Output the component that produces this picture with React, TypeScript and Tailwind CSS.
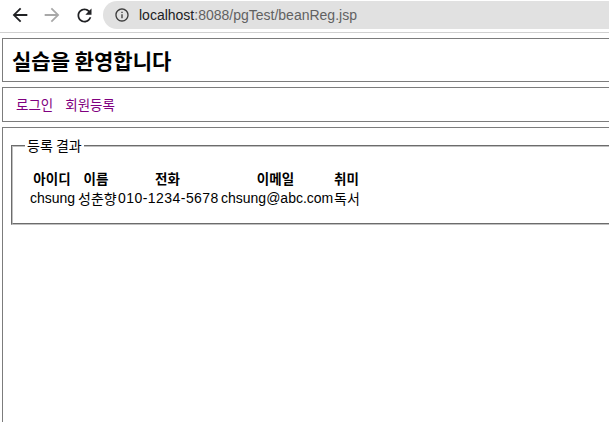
import React from "react";

const cjk = { fontFamily: '"Noto Sans CJK KR", "Noto Sans", sans-serif' };

function BackIcon({ color }: { color: string }) {
  return (
    <svg width="22" height="22" viewBox="0 0 24 24" fill={color}>
      <path d="M20 11H7.83l5.59-5.59L12 4l-8 8 8 8 1.41-1.41L7.83 13H20v-2z" />
    </svg>
  );
}

function ForwardIcon({ color }: { color: string }) {
  return (
    <svg width="22" height="22" viewBox="0 0 24 24" fill={color}>
      <path d="M12 4l-1.41 1.41L16.17 11H4v2h12.17l-5.58 5.59L12 20l8-8z" />
    </svg>
  );
}

function ReloadIcon() {
  return (
    <svg width="21" height="21" viewBox="0 0 24 24" fill="#202124">
      <path d="M17.65 6.35C16.2 4.9 14.21 4 12 4c-4.42 0-7.99 3.58-7.99 8s3.57 8 7.99 8c3.73 0 6.84-2.55 7.73-6h-2.08c-.82 2.33-3.04 4-5.65 4-3.31 0-6-2.69-6-6s2.69-6 6-6c1.66 0 3.14.69 4.22 1.78L13 11h7V4l-2.35 2.35z" />
    </svg>
  );
}

function InfoIcon() {
  return (
    <svg width="16" height="16" viewBox="0 0 24 24" fill="#3c3c3c">
      <path d="M11 7h2v2h-2zm0 4h2v6h-2zm1-9C6.48 2 2 6.48 2 12s4.48 10 10 10 10-4.48 10-10S17.52 2 12 2zm0 18c-4.41 0-8-3.59-8-8s3.59-8 8-8 8 3.59 8 8-3.59 8-8 8z" />
    </svg>
  );
}

function Toolbar() {
  return (
    <div className="h-[33px] border-b border-[#d0d0d0] flex items-start pt-[1px] pl-[4px] bg-white">
      <div className="w-8 shrink-0 h-[28px] flex items-center justify-center">
        <BackIcon color="#202124" />
      </div>
      <div className="w-8 shrink-0 h-[28px] flex items-center justify-center">
        <ForwardIcon color="#a8a8a8" />
      </div>
      <div className="w-8 shrink-0 h-[28px] flex items-center justify-center">
        <ReloadIcon />
      </div>
      <div className="ml-[3px] w-[540px] shrink-0 h-[28px] rounded-full bg-[#e1e1e1] flex items-center pl-[11px]">
        <InfoIcon />
        <span
          className="ml-[9px] text-[14px] whitespace-nowrap"
          style={{ fontFamily: '"Liberation Sans", Arial, sans-serif' }}
        >
          <span className="text-[#202124]">localhost</span>
          <span className="text-[#616161]">:8088/pgTest/beanReg.jsp</span>
        </span>
      </div>
    </div>
  );
}

const headers = ["아이디", "이름", "전화", "이메일", "취미"];
const row = [
  { text: "chsung", latin: true },
  { text: "성춘향", latin: false },
  { text: "010-1234-5678", latin: true },
  { text: "chsung@abc.com", latin: true },
  { text: "독서", latin: false },
];

export default function App() {
  return (
    <div className="w-[609px] h-[422px] overflow-hidden bg-white text-black">
      <Toolbar />
      <div className="pl-[2px] pt-[5px] flex flex-col gap-[5px]">
        <div className="w-[640px] h-[44px] shrink-0 border border-[#7c7c7c] flex items-center pl-[9px]">
          <h1 className="text-[21px] font-bold leading-none" style={cjk}>
            실습을 환영합니다
          </h1>
        </div>
        <div
          className="w-[640px] h-[35px] shrink-0 border border-[#7c7c7c] flex items-center pl-[13px] gap-[12px] text-[13.5px] text-[#800080]"
          style={cjk}
        >
          <a className="cursor-pointer">로그인</a>
          <a className="cursor-pointer">회원등록</a>
        </div>
        <div className="w-[640px] h-[320px] shrink-0 border border-[#7c7c7c] pl-[8px] pt-[9px]">
          <fieldset className="w-[660px] border-2 [border-style:groove] border-[#c0c0c0] pl-[12px] pt-[14px] pb-[15px]">
            <legend className="px-[2px] text-[14px] leading-[17px]" style={cjk}>
              등록 결과
            </legend>
            <div className="ml-[5px] grid grid-cols-[44px_36px_99px_109px_25px] gap-x-[4px]">
              {headers.map((h) => (
                <div
                  key={h}
                  className="h-[20px] flex items-center justify-center text-[13.5px] font-bold whitespace-nowrap"
                  style={cjk}
                >
                  {h}
                </div>
              ))}
              {row.map((c) => (
                <div
                  key={c.text}
                  className={
                    c.text === "010-1234-5678"
                      ? "h-[20px] flex items-center text-[14px] tracking-[0.45px] whitespace-nowrap"
                      : "h-[20px] flex items-center text-[14px] whitespace-nowrap"
                  }
                  style={
                    c.latin
                      ? { fontFamily: '"Liberation Sans", Arial, sans-serif' }
                      : cjk
                  }
                >
                  {c.text}
                </div>
              ))}
            </div>
          </fieldset>
        </div>
      </div>
    </div>
  );
}
